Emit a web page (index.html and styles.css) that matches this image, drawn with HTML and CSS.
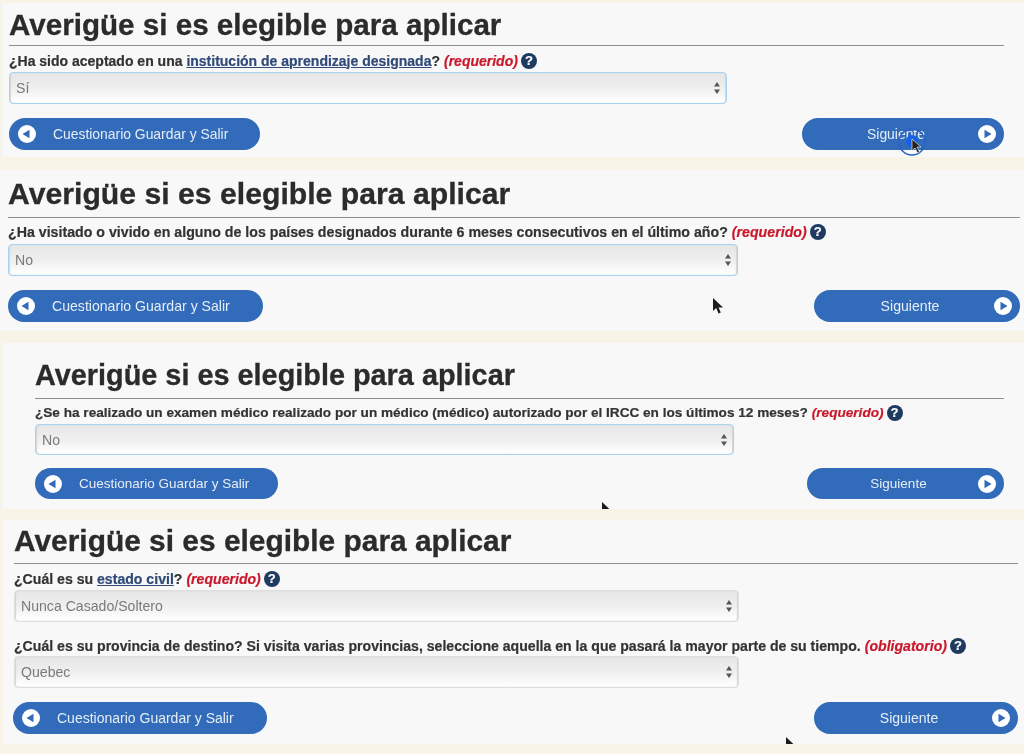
FILE: index.html
```html
<!DOCTYPE html>
<html lang="es">
<head>
<meta charset="utf-8">
<title>Averigüe si es elegible para aplicar</title>
<link rel="stylesheet" href="styles.css">
</head>
<body>
<section class="panel p1">
  <h1>Averigüe si es elegible para aplicar</h1>
  <div class="field">
    <div class="q"><span>¿Ha sido aceptado en una <a href="#">institución de aprendizaje designada</a>?</span> <em>(requerido)</em> <i class="help">?</i></div>
    <div class="select focus"><span>Sí</span><svg class="arrows" viewBox="0 0 8 14"><path d="M4 1 7 5.5H1Z"/><path d="M4 13 7 8.5H1Z"/></svg></div>
  </div>
  <div class="actions">
    <a class="btn back" href="#"><svg class="ico" viewBox="0 0 18 18"><circle cx="9" cy="9" r="9" fill="#fff"/><path d="M4.5 9 11.5 4.8V13.2Z" fill="#316bb9"/></svg><span>Cuestionario Guardar y Salir</span></a>
    <a class="btn next" href="#"><span>Siguiente</span><svg class="ico" viewBox="0 0 18 18"><circle cx="9" cy="9" r="9" fill="#fff"/><path d="M13.5 9 6.5 4.8V13.2Z" fill="#316bb9"/></svg></a>
  </div>
  <svg class="click" viewBox="0 0 30 30"><circle cx="15" cy="15" r="13" fill="none" stroke="#2a62c8" stroke-width="1.5"/><circle cx="15" cy="14" r="6" fill="#1560e8"/><path d="M15 12V24L18 21 20.5 26 22.5 25 20 20H24Z" fill="#222" stroke="#fff" stroke-width=".6"/></svg>
</section>

<section class="panel p2">
  <h1>Averigüe si es elegible para aplicar</h1>
  <div class="field">
    <div class="q"><span>¿Ha visitado o vivido en alguno de los países designados durante 6 meses consecutivos en el último año?</span> <em>(requerido)</em> <i class="help">?</i></div>
    <div class="select focus"><span>No</span><svg class="arrows" viewBox="0 0 8 14"><path d="M4 1 7 5.5H1Z"/><path d="M4 13 7 8.5H1Z"/></svg></div>
  </div>
  <div class="actions">
    <a class="btn back" href="#"><svg class="ico" viewBox="0 0 18 18"><circle cx="9" cy="9" r="9" fill="#fff"/><path d="M4.5 9 11.5 4.8V13.2Z" fill="#316bb9"/></svg><span>Cuestionario Guardar y Salir</span></a>
    <a class="btn next" href="#"><span>Siguiente</span><svg class="ico" viewBox="0 0 18 18"><circle cx="9" cy="9" r="9" fill="#fff"/><path d="M13.5 9 6.5 4.8V13.2Z" fill="#316bb9"/></svg></a>
  </div>
  <svg class="cursor c2" viewBox="0 0 12 18"><path d="M1 1V14L4.2 11 6.5 16.5 8.8 15.5 6.5 10.5H11Z" fill="#1c1c1c"/></svg>
</section>

<section class="panel p3">
  <h1>Averigüe si es elegible para aplicar</h1>
  <div class="field">
    <div class="q"><span>¿Se ha realizado un examen médico realizado por un médico (médico) autorizado por el IRCC en los últimos 12 meses?</span> <em>(requerido)</em> <i class="help">?</i></div>
    <div class="select focus"><span>No</span><svg class="arrows" viewBox="0 0 8 14"><path d="M4 1 7 5.5H1Z"/><path d="M4 13 7 8.5H1Z"/></svg></div>
  </div>
  <div class="actions">
    <a class="btn back" href="#"><svg class="ico" viewBox="0 0 18 18"><circle cx="9" cy="9" r="9" fill="#fff"/><path d="M4.5 9 11.5 4.8V13.2Z" fill="#316bb9"/></svg><span>Cuestionario Guardar y Salir</span></a>
    <a class="btn next" href="#"><span>Siguiente</span><svg class="ico" viewBox="0 0 18 18"><circle cx="9" cy="9" r="9" fill="#fff"/><path d="M13.5 9 6.5 4.8V13.2Z" fill="#316bb9"/></svg></a>
  </div>
  <svg class="cursor c3" viewBox="0 0 12 18"><path d="M1 1V14L4.2 11 6.5 16.5 8.8 15.5 6.5 10.5H11Z" fill="#1c1c1c"/></svg>
</section>

<section class="panel p4">
  <h1>Averigüe si es elegible para aplicar</h1>
  <div class="field">
    <div class="q"><span>¿Cuál es su <a href="#">estado civil</a>?</span> <em>(requerido)</em> <i class="help">?</i></div>
    <div class="select"><span>Nunca Casado/Soltero</span><svg class="arrows" viewBox="0 0 8 14"><path d="M4 1 7 5.5H1Z"/><path d="M4 13 7 8.5H1Z"/></svg></div>
  </div>
  <div class="field second">
    <div class="q"><span>¿Cuál es su provincia de destino? Si visita varias provincias, seleccione aquella en la que pasará la mayor parte de su tiempo.</span> <em>(obligatorio)</em> <i class="help">?</i></div>
    <div class="select"><span>Quebec</span><svg class="arrows" viewBox="0 0 8 14"><path d="M4 1 7 5.5H1Z"/><path d="M4 13 7 8.5H1Z"/></svg></div>
  </div>
  <div class="actions">
    <a class="btn back" href="#"><svg class="ico" viewBox="0 0 18 18"><circle cx="9" cy="9" r="9" fill="#fff"/><path d="M4.5 9 11.5 4.8V13.2Z" fill="#316bb9"/></svg><span>Cuestionario Guardar y Salir</span></a>
    <a class="btn next" href="#"><span>Siguiente</span><svg class="ico" viewBox="0 0 18 18"><circle cx="9" cy="9" r="9" fill="#fff"/><path d="M13.5 9 6.5 4.8V13.2Z" fill="#316bb9"/></svg></a>
  </div>
  <svg class="cursor c4" viewBox="0 0 12 18"><path d="M1 1V14L4.2 11 6.5 16.5 8.8 15.5 6.5 10.5H11Z" fill="#1c1c1c"/></svg>
</section>
</body>
</html>
```
FILE: styles.css
```css
* { box-sizing: border-box; }
html, body { height: 100%; }
body {
  margin: 0;
  background: #f8f3e7;
  font-family: "Liberation Sans", Arial, sans-serif;
  overflow: hidden;
  display: flex;
  flex-direction: column;
}
.panel {
  position: relative;
  overflow: hidden;
  background: #f8f8f8;
  flex: none;
  filter: blur(0.6px);
  --ctl: 32px;
  --qh: 26px;
  --qp: 3px;
  --gap: 14px;
}
.p1 { margin: 3px 0 13px 2px; height: 154px; padding-left: 7px; padding-right: 20px; --h: 29.6px; --hb: 5px; --q: 14px; --b: 13.9px; --bk: 251px; --nx: 202px; --sel: 718px; --top: 43px; }
.p2 { margin: 0 0 12px 0; height: 161px; padding-left: 8px; padding-right: 4px; --h: 30.2px; --hb: 8px; --q: 14.2px; --b: 14.1px; --bk: 255px; --nx: 206px; --sel: 730px; --top: 48px; --qp: 2px; }
.p3 { margin: 0 0 11px 2px; height: 166px; padding-left: 33px; padding-right: 20px; --h: 28.85px; --hb: 8px; --q: 13.6px; --b: 13.5px; --bk: 243px; --nx: 197px; --sel: 699px; --top: 56px; --ctl: 31px; --qh: 25px; --gap: 13px; --qp: 2px; }
.p4 { margin: 0 0 10px 3px; height: 224px; padding-left: 11px; padding-right: 6px; --h: 29.9px; --hb: 7px; --q: 14.1px; --b: 14px; --bk: 254px; --nx: 204px; --sel: 725px; --top: 44px; }

h1 {
  margin: 0;
  height: var(--top);
  display: flex;
  align-items: flex-end;
  padding-bottom: var(--hb);
  font-size: var(--h);
  line-height: 1;
  font-weight: 700;
  color: #2b2b2b;
  -webkit-text-stroke: 0.3px #2b2b2b;
  border-bottom: 1.5px solid #8e8e8e;
  white-space: nowrap;
}
.q {
  height: var(--qh);
  padding-top: var(--qp);
  display: flex;
  align-items: center;
  gap: 4px;
  font-size: var(--q);
  font-weight: 700;
  color: #333;
  -webkit-text-stroke: 0.2px currentColor;
  white-space: nowrap;
}
.q a { color: #2f4a78; text-decoration: underline; }
.q em { color: #c9182b; font-style: italic; }
.help {
  width: 16px;
  height: 16px;
  margin-left: -1px;
  border-radius: 50%;
  background: #1f3a60;
  color: #fff;
  font-style: normal;
  font-size: 13px;
  line-height: 16px;
  text-align: center;
  flex: none;
}
.select {
  width: var(--sel);
  height: var(--ctl);
  padding: 0 5px 0 6px;
  display: flex;
  align-items: center;
  justify-content: space-between;
  font-size: 14.1px;
  color: #7a7a7a;
  border: 1px solid #dedede;
  border-radius: 4px;
  background: linear-gradient(#e6e6e6, #f0f0f0 55%, #fbfbfb 85%, #fff);
  box-shadow: inset 1px 0 1px #d4d4d4, inset -1px 0 1px #d4d4d4;
}
.select.focus { border-color: #a8d4f2; }
.arrows { width: 8px; height: 14px; fill: #555; flex: none; }
.field.second .q { height: 34px; padding-top: 13px; }
.actions {
  margin-top: var(--gap);
  display: flex;
  justify-content: space-between;
}
.btn {
  height: var(--ctl);
  display: flex;
  align-items: center;
  border-radius: 16px;
  background: #316bb9;
  color: #e6edf6;
  font-size: var(--b);
  text-decoration: none;
}
.back { width: var(--bk); padding-left: 9px; gap: 17px; }
.p4 .back { margin-left: -1px; }
.next { width: var(--nx); padding-left: 12px; padding-right: 8px; }
.next span { flex: 1; text-align: center; }
.ico { width: 18px; height: 18px; flex: none; }
.click { position: absolute; left: 895px; top: 124px; width: 30px; height: 30px; }
.cursor { position: absolute; width: 12px; height: 18px; }
.c2 { left: 712px; top: 127px; }
.c3 { left: 599px; top: 158px; }
.c4 { left: 782px; top: 216px; }
```
